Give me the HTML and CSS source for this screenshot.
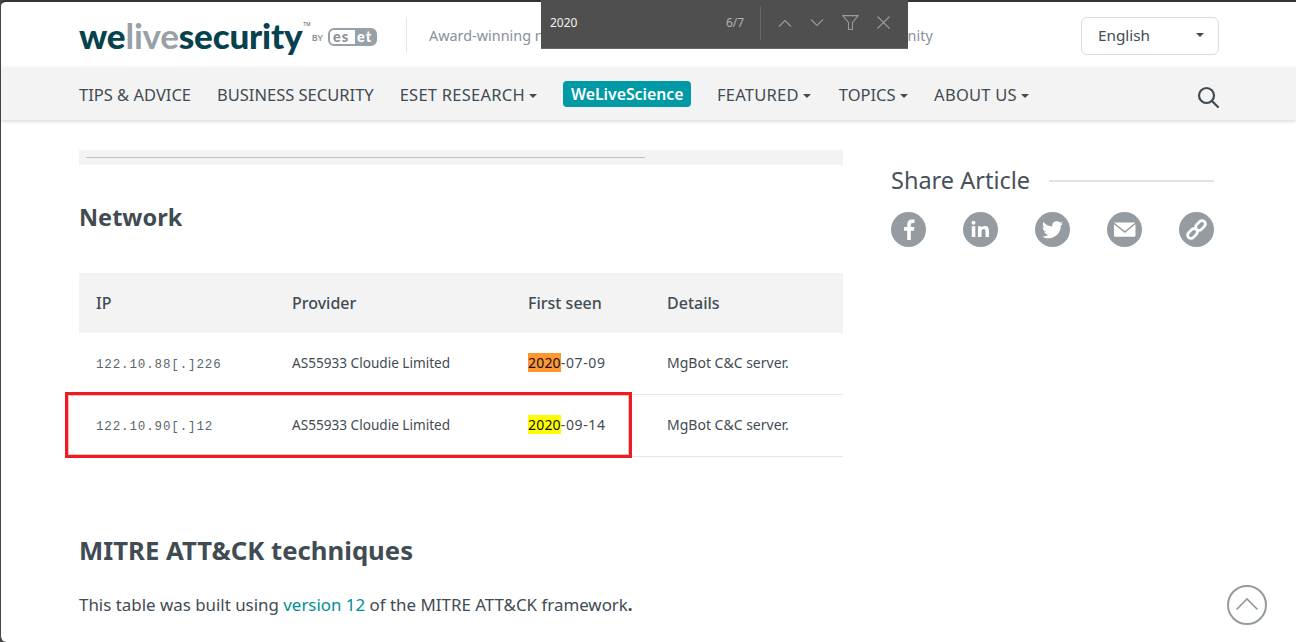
FILE: index.html
```html
<!DOCTYPE html>
<html lang="en">
<head>
  <meta charset="UTF-8">
  <title>ESET Research</title>
  <link rel="stylesheet" href="styles.css">
</head>
<body>
<header class="top">
  <div class="logo">
    <span class="logo-word">we<span class="logo-live">live</span>security</span>
    <span class="logo-tm">TM</span>
    <span class="logo-by">BY</span>
    <span class="logo-eset"><span class="logo-es">es</span><span class="logo-et">et</span></span>
  </div>
  <div class="tagline">Award-winning news, views, and insight from the ESET security community</div>
  <div class="lang">
    <span>English</span>
    <i class="caret"></i>
  </div>
</header>

<nav class="nav">
  <a class="nav-item">TIPS &amp; ADVICE</a>
  <a class="nav-item">BUSINESS SECURITY</a>
  <a class="nav-item has-caret">ESET RESEARCH<i class="caret"></i></a>
  <a class="nav-pill">WeLiveScience</a>
  <a class="nav-item has-caret nav-featured">FEATURED<i class="caret"></i></a>
  <a class="nav-item has-caret nav-topics">TOPICS<i class="caret"></i></a>
  <a class="nav-item has-caret">ABOUT US<i class="caret"></i></a>
  <svg class="search" width="22" height="22" viewBox="0 0 22 22" fill="none" stroke="#3f4a52" stroke-width="2.200">
    <circle cx="9.500" cy="9.500" r="7.500"/>
    <path d="M15 15l6 6" stroke-linecap="round"/>
  </svg>
</nav>

<div class="page">
  <main class="article">
    <div class="hscroll"><div class="hscroll-bar"></div></div>
    <h3 class="net-title">Network</h3>
    <table class="net">
      <thead>
        <tr><th class="c1">IP</th><th class="c2">Provider</th><th class="c3">First seen</th><th>Details</th></tr>
      </thead>
      <tbody>
        <tr>
          <td><code>122.10.88[.]226</code></td>
          <td class="provider">AS55933 Cloudie Limited</td>
          <td class="date"><mark class="now">2020</mark>-07-09</td>
          <td>MgBot C&amp;C server.</td>
        </tr>
        <tr>
          <td><code>122.10.90[.]12</code></td>
          <td class="provider">AS55933 Cloudie Limited</td>
          <td class="date"><mark>2020</mark>-09-14</td>
          <td>MgBot C&amp;C server.</td>
        </tr>
      </tbody>
    </table>
    <h2 class="mitre">MITRE ATT&amp;CK techniques</h2>
    <p class="intro">This table was built using <a>version 12</a> of the MITRE ATT&amp;CK framework<b>.</b></p>
  </main>

  <aside class="side">
    <div class="share-head"><span>Share Article</span><div class="share-line"></div></div>
    <div class="share-icons">
      <div class="share"><svg width="35" height="35" viewBox="0 0 35 35"><path fill="#fff" d="M19.800 28v-9.300h3.100l.5-3.700h-3.600v-2.300c0-1.100.3-1.800 1.800-1.800h1.900V7.600c-.4 0-1.500-.1-2.700-.1-2.700 0-4.600 1.700-4.600 4.700V15h-3.100v3.700h3.100V28z"/></svg></div>
      <div class="share"><svg width="35" height="35" viewBox="0 0 35 35"><g fill="#fff"><circle cx="10.500" cy="10.800" r="2"/><rect x="8.800" y="14.200" width="3.500" height="10.800"/><path d="M15 14.200h3.300v1.500c.6-1 1.800-1.800 3.500-1.800 3.300 0 4.200 2.100 4.200 5V25h-3.500v-5.300c0-1.500-.3-2.800-1.900-2.800s-2.100 1.200-2.100 2.700V25H15z"/></g></svg></div>
      <div class="share"><svg width="35" height="35" viewBox="0 0 35 35"><path fill="#fff" d="M28 11.300c-.8.300-1.600.6-2.500.7.900-.5 1.600-1.400 1.900-2.400-.8.500-1.800.9-2.700 1-.8-.9-1.900-1.400-3.200-1.400-2.400 0-4.300 1.900-4.300 4.300 0 .3 0 .7.100 1-3.600-.2-6.800-1.900-8.900-4.500-.4.600-.6 1.400-.6 2.200 0 1.500.8 2.800 1.900 3.600-.7 0-1.400-.2-2-.5v.1c0 2.100 1.500 3.800 3.500 4.200-.4.100-.8.200-1.100.2-.3 0-.5 0-.8-.1.600 1.700 2.100 2.900 4 3-1.500 1.100-3.300 1.800-5.300 1.800-.3 0-.7 0-1-.1 1.900 1.200 4.200 1.900 6.600 1.900 7.900 0 12.200-6.500 12.200-12.200v-.6c.9-.6 1.600-1.400 2.200-2.200z"/></svg></div>
      <div class="share"><svg width="35" height="35" viewBox="0 0 35 35"><path fill="#fff" d="M8 10.500h19.500c.3 0 .5.100.7.200l-10.400 8.400L7.300 10.700c.2-.1.400-.2.700-.2zM7 12.300v11.200c0 .7.500 1.200 1 1.200h19.500c.5 0 1-.5 1-1.200V12.300l-10.700 8.600z"/></svg></div>
      <div class="share"><svg width="35" height="35" viewBox="0 0 35 35" fill="none" stroke="#fff" stroke-width="2.800"><rect x="8" y="18.200" width="11" height="6.600" rx="3.300" transform="rotate(-45 13.500 21.500)"/><rect x="16" y="10.200" width="11" height="6.600" rx="3.300" transform="rotate(-45 21.500 13.500)"/></svg></div>
    </div>
  </aside>
</div>

<div class="findbar">
  <span class="find-term">2020</span>
  <span class="find-count">6/7</span>
  <div class="find-sep"></div>
  <svg width="14" height="8" viewBox="0 0 14 8" fill="none" stroke="#9a9a9a" stroke-width="1.100"><path d="M1 7.500L7 1.500l6 6"/></svg>
  <svg width="14" height="8" viewBox="0 0 14 8" fill="none" stroke="#9a9a9a" stroke-width="1.100"><path d="M1 .5l6 6 6-6"/></svg>
  <svg width="17" height="15" viewBox="0 0 17 15" fill="none" stroke="#9a9a9a" stroke-width="1.100"><path d="M.8.600h15.400L10.500 7.500v7h-4v-7z"/></svg>
  <svg width="13" height="13" viewBox="0 0 13 13" fill="none" stroke="#9a9a9a" stroke-width="1.100"><path d="M.5.500l12 12M12.500.500l-12 12"/></svg>
</div>

<div class="redbox"></div>

<div class="totop">
  <svg width="24" height="14" viewBox="0 0 24 14" fill="none" stroke="#8f979c" stroke-width="1.600"><path d="M1.500 12.500L12 2l10.500 10.500"/></svg>
</div>
</body>
</html>
```

FILE: styles.css
```css
* {
  margin: 0;
  padding: 0;
  box-sizing: border-box;
}
html {
  background: #444;
}
body {
  font-family: "Noto Sans", "Open Sans", sans-serif;
  color: #414b53;
  background: #fff;
  height: 642px;
  overflow: hidden;
  border-top: 2px solid #333;
  border-left: 1px solid #444;
  border-radius: 6px 0 0 6px;
}
.top {
  height: 66px;
  display: flex;
  align-items: center;
  padding: 0 77px 0 78px;
}
.logo {
  display: flex;
  align-items: center;
  flex: none;
  width: 328px;
  height: 36px;
  border-right: 1px solid #e6e6e6;
}
.logo-word {
  font-family: Lato, sans-serif;
  font-weight: 900;
  font-size: 35px;
  letter-spacing: -.2px;
  color: #06424e;
  line-height: 36px;
}
.logo-live {
  color: #98a1a8;
  font-weight: 700;
}
.logo-tm {
  font-size: 5px;
  align-self: flex-start;
  margin: 4px 0 0 1px;
  color: #555;
}
.logo-by {
  font-size: 9px;
  font-weight: 600;
  color: #8b9399;
  margin: 4px 5px 0 1px;
}
.logo-eset {
  display: flex;
  font-family: Lato, sans-serif;
  font-weight: 900;
  font-size: 14.500px;
  letter-spacing: 1px;
  line-height: 13px;
  height: 18px;
  width: 49px;
  color: #8b9399;
  border: 2px solid #98a1a8;
  border-radius: 6px;
  margin-top: 3px;
}
.logo-es {
  width: 25px;
  padding-left: 3px;
}
.logo-et {
  flex: 1;
  background: #98a1a8;
  color: #fff;
  padding-left: 2px;
}
.tagline {
  font-size: 14.400px;
  color: #87909a;
  margin-left: 22px;
  width: 560px;
  white-space: nowrap;
  overflow: hidden;
}
.lang {
  width: 138px;
  height: 38px;
  border: 1px solid #dcdcdc;
  border-radius: 6px;
  display: flex;
  align-items: center;
  justify-content: space-between;
  padding: 0 14px 2px 16px;
  font-size: 15.300px;
  margin: 2px 0 0 auto;
}
.caret {
  display: inline-block;
  width: 0;
  height: 0;
  border-top: 4px solid #414b53;
  border-left: 4px solid transparent;
  border-right: 4px solid transparent;
  margin-left: 4px;
  vertical-align: 3px;
}
.nav {
  height: 52px;
  background: #f3f3f3;
  box-shadow: 0 1px 4px rgba(0, 0, 0, .18);
  display: flex;
  align-items: center;
  padding: 1px 77px 0 78px;
  font-size: 16.500px;
  position: relative;
}
.nav-item {
  margin-right: 26px;
  white-space: nowrap;
}
.has-caret {
  letter-spacing: .25px;
  margin-right: 26.500px;
}
.nav-featured {
  margin-right: 28px;
}
.nav-topics {
  letter-spacing: 0;
}
.nav-pill {
  background: #0099a6;
  color: #fff;
  font-size: 15.800px;
  font-weight: 600;
  border-radius: 4px;
  height: 26px;
  line-height: 26px;
  padding: 0 7.500px;
  margin: -1px 26px 0 0;
}
.search {
  margin-left: auto;
  margin-top: 4px;
}
.page {
  display: flex;
  padding: 30px 0 0 78px;
}
.article {
  width: 764px;
}
.hscroll {
  height: 15px;
  background: #f3f3f3;
  padding: 7px 7px 0;
}
.hscroll-bar {
  width: 559px;
  height: 1px;
  background: #bfbfbf;
}
.net-title {
  font-size: 23.500px;
  line-height: 32px;
  margin-top: 36px;
  font-weight: 700;
}
.net {
  width: 764px;
  border-collapse: separate;
  border-spacing: 0;
  margin-top: 40px;
  font-size: 14px;
}
.net th {
  height: 60px;
  background: #f3f3f3;
  text-align: left;
  font-size: 16px;
  font-weight: 500;
  padding-left: 16px;
}
.net td {
  height: 62px;
  padding: 0 0 2px 16px;
  border-bottom: 1px solid #e6e6e6;
}
.net th:first-child,
.net td:first-child {
  padding-left: 17px;
}
.net .provider {
  font-size: 13.600px;
}
.net .date {
  letter-spacing: .6px;
}
.c1 {
  width: 197px;
}
.c2 {
  width: 236px;
}
.c3 {
  width: 139px;
}
code {
  font-family: "Liberation Mono", monospace;
  font-size: 12.500px;
  letter-spacing: .87px;
  color: #5b6670;
}
mark {
  background: #ffff00;
  color: #111;
  letter-spacing: .2px;
}
mark.now {
  background: #ff9632;
}
.mitre {
  font-size: 25.700px;
  line-height: 34px;
  margin-top: 77px;
  font-weight: 700;
}
.intro {
  font-size: 16.900px;
  margin-top: 25px;
  line-height: 24px;
}
.intro a {
  color: #008d99;
}
.side {
  width: 323px;
  margin-left: 48px;
  padding-top: 13px;
}
.share-head {
  display: flex;
  align-items: center;
  font-size: 23.500px;
  line-height: 34px;
  color: #47515a;
}
.share-line {
  flex: 1;
  height: 2px;
  background: #e3e3e3;
  margin: 2px 0 0 19px;
}
.share-icons {
  display: flex;
  justify-content: space-between;
  margin-top: 15px;
}
.share {
  width: 35px;
  height: 35px;
  border-radius: 50%;
  background: #949ca1;
}
.share svg {
  display: block;
}

/* stuff on top of the page */
.findbar {
  position: absolute;
  left: 541px;
  top: 0;
  width: 367px;
  height: 49px;
  background: #4f4f4f;
  border-bottom: 1px solid #666;
  display: flex;
  align-items: center;
  padding: 0 18px 3px 9px;
  font-size: 12px;
  color: #f2f2f2;
}
.find-term {
  width: 176px;
}
.find-count {
  width: 34px;
  color: #b4b4b4;
}
.find-sep {
  width: 1px;
  height: 34px;
  background: #666;
  margin-right: 17px;
}
.findbar svg {
  margin-right: 18px;
}
.findbar svg:last-child {
  margin-right: 0;
}
.redbox {
  position: absolute;
  left: 65px;
  top: 392px;
  width: 567px;
  height: 66px;
  border: 3px solid #ed1c24;
  box-shadow: inset 0 0 0 1px rgba(237, 28, 36, .3);
}
.totop {
  position: absolute;
  left: 1227px;
  top: 585px;
  width: 40px;
  height: 40px;
  border: 2px solid #949ca1;
  border-radius: 50%;
  display: flex;
  align-items: center;
  justify-content: center;
  padding-bottom: 3px;
}
```
